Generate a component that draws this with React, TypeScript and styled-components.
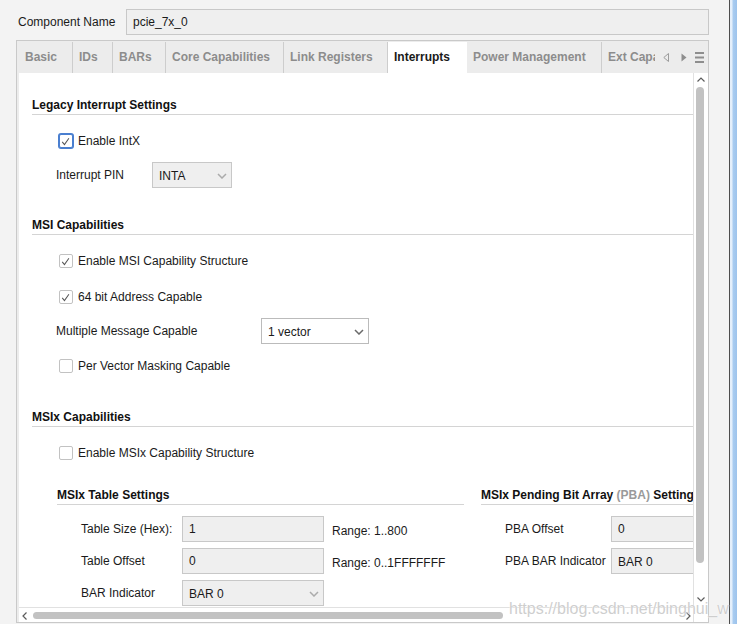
import React from "react";
import styled, { createGlobalStyle } from "styled-components";

const GlobalStyle = createGlobalStyle`
  html, body { margin: 0; padding: 0; background: #f3f3f3; }
  body {
    font-family: "Liberation Sans", Arial, sans-serif;
    font-size: 12px;
    color: #1a1a1a;
  }
  * { box-sizing: border-box; }
`;

const Window = styled.div`
  position: relative;
  display: flex;
  width: 737px;
  height: 624px;
  overflow: hidden;
  background: #f3f3f3;
`;

const Main = styled.div`
  display: flex;
  flex-direction: column;
  width: 693px;
  margin-left: 16px;
  padding-top: 9px;
  flex: none;
`;

const Gutter = styled.div`
  flex: 1;
`;

const FrameEdge = styled.div`
  width: 8px;
  flex: none;
  border-left: 1px solid #4d4d4d;
  background: linear-gradient(to right, #e4effb 0, #e4effb 2px, #a9ccf0 3px, #9dc3ec 100%);
`;

const NameRow = styled.div`
  display: flex;
  align-items: center;
  height: 26px;
`;

const NameLabel = styled.span`
  width: 110px;
  padding-left: 2px;
  white-space: nowrap;
`;

const NameInput = styled.div`
  flex: 1;
  height: 26px;
  display: flex;
  align-items: center;
  padding-left: 6px;
  border: 1px solid #c8c8c8;
  background: #efefef;
`;

const Pane = styled.div`
  margin-top: 5px;
  height: 583px;
  display: flex;
  flex-direction: column;
  border: 1px solid #c9c9c9;
  background: #ececec;
  padding-left: 2px;
`;

const TabBar = styled.div`
  display: flex;
  height: 32px;
  padding-top: 1px;
  flex: none;
`;

const Tab = styled.div<{ $w: number; $active?: boolean; $clip?: boolean }>`
  width: ${(p) => p.$w}px;
  flex: none;
  display: flex;
  align-items: center;
  padding-left: 6px;
  padding-bottom: 1px;
  font-weight: bold;
  white-space: nowrap;
  overflow: hidden;
  color: ${(p) => (p.$active ? "#1a1a1a" : "#8c8c8c")};
  background: ${(p) => (p.$active ? "#ffffff" : "transparent")};
  border-right: 1px solid
    ${(p) => (p.$active || p.$clip ? "transparent" : "#cdcdcd")};
`;

const TabTools = styled.div`
  display: flex;
  align-items: center;
  padding-left: 7px;
`;

const ToolIcon = styled.span<{ $ml: number }>`
  display: flex;
  margin-left: ${(p) => p.$ml}px;
`;

const Body = styled.div`
  display: grid;
  grid-template-columns: 674px 15px;
  grid-template-rows: 534px 15px;
  flex: none;
`;

const Viewport = styled.div`
  background: #ffffff;
  overflow: hidden;
`;

const VScroll = styled.div`
  grid-row: 1 / 3;
  grid-column: 2;
  display: flex;
  flex-direction: column;
  align-items: flex-start;
  padding-left: 2px;
  padding-top: 4px;
  background: #ffffff;
  border-left: 1px solid #e1e1e1;
`;

const VArrow = styled.span<{ $mt: number }>`
  display: flex;
  margin-left: 1px;
  margin-top: ${(p) => p.$mt}px;
`;

const VThumb = styled.div`
  width: 8px;
  height: 476px;
  margin-top: 5px;
  border-radius: 4px;
  background: #c2c2c2;
`;

const HScroll = styled.div`
  display: flex;
  align-items: center;
  padding: 1px 2px 0 3px;
  background: #ffffff;
  border-top: 1px solid #e1e1e1;
`;

const HThumb = styled.div`
  width: 470px;
  height: 7px;
  margin-left: 6px;
  border-radius: 4px;
  background: #c2c2c2;
`;

const HArrowRight = styled.span`
  display: flex;
  margin-left: auto;
`;

const Form = styled.div`
  width: 940px;
  display: flex;
  flex-direction: column;
  padding: 24px 0 0 13px;
`;

const Heading = styled.div<{ $mt?: number }>`
  margin-top: ${(p) => p.$mt ?? 0}px;
  font-weight: bold;
  color: #111111;
  line-height: 14px;
  padding-top: 1px;
  padding-bottom: 2px;
  border-bottom: 1px solid #d4d4d4;
  white-space: nowrap;
`;

const Muted = styled.span`
  color: #9a9a9a;
`;

const CheckRow = styled.label<{ $mt: number }>`
  display: flex;
  align-items: center;
  gap: 5px;
  height: 20px;
  padding-top: 2px;
  margin-left: 27px;
  margin-top: ${(p) => p.$mt}px;
  white-space: nowrap;
`;

const Box = styled.span<{ $focus?: boolean }>`
  width: 14px;
  height: 14px;
  flex: none;
  display: flex;
  border-radius: 2px;
  background: #ffffff;
  border: 1px solid ${(p) => (p.$focus ? "#4a7fd0" : "#c2c2c2")};
  box-shadow: ${(p) => (p.$focus ? "0 0 0 1px #4a7fd0" : "none")};
`;

const FieldRow = styled.div<{ $mt: number }>`
  display: flex;
  align-items: center;
  height: 26px;
  margin-left: 24px;
  margin-top: ${(p) => p.$mt}px;
`;

const FieldLabel = styled.span<{ $w: number }>`
  width: ${(p) => p.$w}px;
  flex: none;
  white-space: nowrap;
`;

const Combo = styled.div<{ $w: number; $disabled?: boolean }>`
  width: ${(p) => p.$w}px;
  height: 26px;
  flex: none;
  display: flex;
  align-items: center;
  justify-content: space-between;
  padding: 1px 4px 0 6px;
  border: 1px solid ${(p) => (p.$disabled ? "#c8c8c8" : "#bbbbbb")};
  background: ${(p) => (p.$disabled ? "#efefef" : "#ffffff")};
  white-space: nowrap;
`;

const TextBox = styled.div`
  width: 142px;
  height: 26px;
  flex: none;
  display: flex;
  align-items: center;
  padding-left: 6px;
  border: 1px solid #c8c8c8;
  background: #efefef;
`;

const SubColumns = styled.div`
  display: grid;
  grid-template-columns: 407px 407px;
  column-gap: 17px;
  margin-left: 25px;
  margin-top: 25px;
`;

const SubSection = styled.div`
  display: flex;
  flex-direction: column;
`;

const SubRows = styled.div`
  display: flex;
  flex-direction: column;
  gap: 6px;
  margin-top: 11px;
  padding-left: 24px;
`;

const SubRow = styled.div`
  display: flex;
  align-items: center;
  height: 26px;
`;

const Range = styled.span`
  margin-left: 8px;
  padding-top: 4px;
  white-space: nowrap;
`;

const Watermark = styled.div`
  position: absolute;
  left: 509px;
  top: 601px;
  font-size: 16px;
  line-height: 16px;
  white-space: nowrap;
  color: rgba(190, 190, 190, 0.75);
  text-shadow: 0 0 1px #ffffff, 0 0 1px #ffffff;
  pointer-events: none;
`;

const Check = () => (
  <svg width="14" height="14" viewBox="0 0 14 14">
    <path d="M2.6 6.8 L5.2 10 L10.4 2.6" fill="none" stroke="#555555" strokeWidth="1.2" />
  </svg>
);

const Chevron = ({ color }: { color: string }) => (
  <svg width="10" height="6" viewBox="0 0 10 6">
    <path d="M1 1 L5 5 L9 1" fill="none" stroke={color} strokeWidth="1.5" />
  </svg>
);

const CheckBox = ({ checked, focus }: { checked?: boolean; focus?: boolean }) => (
  <Box $focus={focus}>{checked ? <Check /> : null}</Box>
);

const tabs = [
  { label: "Basic", w: 54 },
  { label: "IDs", w: 40 },
  { label: "BARs", w: 53 },
  { label: "Core Capabilities", w: 118 },
  { label: "Link Registers", w: 104 },
  { label: "Interrupts", w: 79, active: true },
  { label: "Power Management", w: 135 },
  { label: "Ext Capabilities", w: 54, clip: true },
];

export default function App() {
  return (
    <>
      <GlobalStyle />
      <Window>
        <Main>
          <NameRow>
            <NameLabel>Component Name</NameLabel>
            <NameInput>pcie_7x_0</NameInput>
          </NameRow>
          <Pane>
            <TabBar>
              {tabs.map((t) => (
                <Tab key={t.label} $w={t.w} $active={t.active} $clip={t.clip}>
                  {t.label}
                </Tab>
              ))}
              <TabTools>
                <ToolIcon $ml={0}>
                  <svg width="6" height="9" viewBox="0 0 6 9">
                    <path d="M5.5 0.5 L0.8 4.5 L5.5 8.5 Z" fill="none" stroke="#9c9c9c" strokeWidth="1" />
                  </svg>
                </ToolIcon>
                <ToolIcon $ml={12}>
                  <svg width="6" height="9" viewBox="0 0 6 9">
                    <path d="M0.5 0.5 L5.5 4.5 L0.5 8.5 Z" fill="#8e8e8e" />
                  </svg>
                </ToolIcon>
                <ToolIcon $ml={8}>
                  <svg width="9" height="11" viewBox="0 0 9 11">
                    <rect x="0" y="0" width="9" height="2" fill="#8e8e8e" />
                    <rect x="0" y="4.5" width="9" height="2" fill="#8e8e8e" />
                    <rect x="0" y="9" width="9" height="2" fill="#8e8e8e" />
                  </svg>
                </ToolIcon>
              </TabTools>
            </TabBar>
            <Body>
              <Viewport>
                <Form>
                  <Heading>Legacy Interrupt Settings</Heading>
                  <CheckRow $mt={15}>
                    <CheckBox checked focus />
                    Enable IntX
                  </CheckRow>
                  <FieldRow $mt={12}>
                    <FieldLabel $w={96}>Interrupt PIN</FieldLabel>
                    <Combo $w={80} $disabled>
                      INTA
                      <Chevron color="#ababab" />
                    </Combo>
                  </FieldRow>

                  <Heading $mt={29}>MSI Capabilities</Heading>
                  <CheckRow $mt={15}>
                    <CheckBox checked />
                    Enable MSI Capability Structure
                  </CheckRow>
                  <CheckRow $mt={16}>
                    <CheckBox checked />
                    64 bit Address Capable
                  </CheckRow>
                  <FieldRow $mt={12}>
                    <FieldLabel $w={205}>Multiple Message Capable</FieldLabel>
                    <Combo $w={108}>
                      1 vector
                      <Chevron color="#6a6a6a" />
                    </Combo>
                  </FieldRow>
                  <CheckRow $mt={11}>
                    <CheckBox />
                    Per Vector Masking Capable
                  </CheckRow>

                  <Heading $mt={34}>MSIx Capabilities</Heading>
                  <CheckRow $mt={15}>
                    <CheckBox />
                    Enable MSIx Capability Structure
                  </CheckRow>

                  <SubColumns>
                    <SubSection>
                      <Heading>MSIx Table Settings</Heading>
                      <SubRows>
                        <SubRow>
                          <FieldLabel $w={101}>Table Size (Hex):</FieldLabel>
                          <TextBox>1</TextBox>
                          <Range>Range: 1..800</Range>
                        </SubRow>
                        <SubRow>
                          <FieldLabel $w={101}>Table Offset</FieldLabel>
                          <TextBox>0</TextBox>
                          <Range>Range: 0..1FFFFFFF</Range>
                        </SubRow>
                        <SubRow>
                          <FieldLabel $w={101}>BAR Indicator</FieldLabel>
                          <Combo $w={142} $disabled>
                            BAR 0
                            <Chevron color="#ababab" />
                          </Combo>
                        </SubRow>
                      </SubRows>
                    </SubSection>
                    <SubSection>
                      <Heading>
                        MSIx Pending Bit Array <Muted>(PBA)</Muted> Settings
                      </Heading>
                      <SubRows>
                        <SubRow>
                          <FieldLabel $w={106}>PBA Offset</FieldLabel>
                          <TextBox>0</TextBox>
                        </SubRow>
                        <SubRow>
                          <FieldLabel $w={106}>PBA BAR Indicator</FieldLabel>
                          <Combo $w={142} $disabled>
                            BAR 0
                            <Chevron color="#ababab" />
                          </Combo>
                        </SubRow>
                      </SubRows>
                    </SubSection>
                  </SubColumns>
                </Form>
              </Viewport>
              <VScroll>
                <VArrow $mt={0}>
                  <svg width="8" height="5" viewBox="0 0 8 5">
                    <path d="M0.5 4.5 L4 1 L7.5 4.5" fill="none" stroke="#5c5c5c" strokeWidth="1.2" />
                  </svg>
                </VArrow>
                <VThumb />
                <VArrow $mt={34}>
                  <svg width="8" height="5" viewBox="0 0 8 5">
                    <path d="M0.5 0.5 L4 4 L7.5 0.5" fill="none" stroke="#5c5c5c" strokeWidth="1.2" />
                  </svg>
                </VArrow>
              </VScroll>
              <HScroll>
                <svg width="5" height="8" viewBox="0 0 5 8">
                  <path d="M4.5 0.5 L1 4 L4.5 7.5" fill="none" stroke="#5c5c5c" strokeWidth="1.2" />
                </svg>
                <HThumb />
                <HArrowRight>
                  <svg width="5" height="8" viewBox="0 0 5 8">
                    <path d="M0.5 0.5 L4 4 L0.5 7.5" fill="none" stroke="#5c5c5c" strokeWidth="1.2" />
                  </svg>
                </HArrowRight>
              </HScroll>
            </Body>
          </Pane>
        </Main>
        <Gutter />
        <FrameEdge />
        <Watermark>https://blog.csdn.net/binghui_w</Watermark>
      </Window>
    </>
  );
}
